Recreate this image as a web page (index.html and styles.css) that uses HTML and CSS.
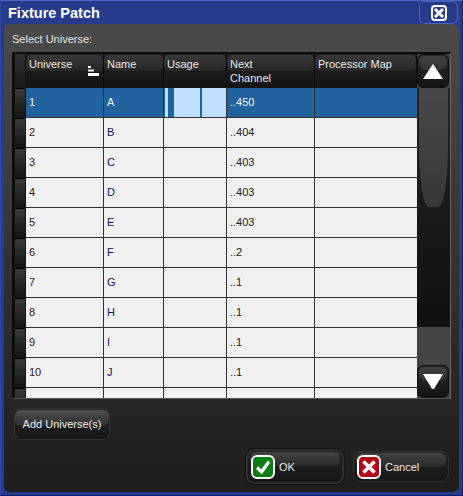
FILE: index.html
```html
<!DOCTYPE html>
<html lang="en">
<head>
    <meta charset="UTF-8">
    <title>Fixture Patch</title>
    <link rel="stylesheet" href="styles.css">
</head>
<body>
    <div class="window">
        <div class="titlebar">
            <span class="title">Fixture Patch</span>
            <div class="close-btn">
                <svg width="16" height="16" viewBox="0 0 16 16">
                    <rect x="1" y="1" width="14" height="14" rx="3" fill="none" stroke="#fff" stroke-width="2"/>
                    <path d="M4 4 L12 12 M12 4 L4 12" stroke="#fff" stroke-width="3"/>
                </svg>
            </div>
        </div>
        <div class="panel">
            <div class="select-label">Select Universe:</div>
            <div class="grid-box">
                <div class="selectors">
                    <div class="sel-head"></div>
                    <div class="sel"></div><div class="sel"></div><div class="sel"></div><div class="sel"></div><div class="sel"></div>
                    <div class="sel"></div><div class="sel"></div><div class="sel"></div><div class="sel"></div><div class="sel"></div>
                    <div class="sel"></div>
                </div>
                <div class="table">
                    <div class="row head">
                        <div class="hcell">Universe
                            <svg class="sort" width="11" height="10" viewBox="0 0 11 10">
                                <path d="M0 0h3v2H0zM0 3.500h6v2H0zM0 7h11v3H0z" fill="#fff"/>
                            </svg>
                        </div>
                        <div class="hcell">Name</div>
                        <div class="hcell">Usage</div>
                        <div class="hcell">Next<br>Channel</div>
                        <div class="hcell">Processor Map</div>
                    </div>
                    <div class="row active">
                        <div class="cell">1</div><div class="cell">A</div>
                        <div class="cell usage">
                            <span class="use" style="width:3px"></span>
                            <span class="use" style="width:26px;margin-left:6px"></span>
                            <span class="use" style="width:24px;margin-left:2px"></span>
                        </div>
                        <div class="cell">..450</div><div class="cell"></div>
                    </div>
                    <div class="row"><div class="cell num">2</div><div class="cell name">B</div><div class="cell"></div><div class="cell">..404</div><div class="cell"></div></div>
                    <div class="row"><div class="cell num">3</div><div class="cell name">C</div><div class="cell"></div><div class="cell">..403</div><div class="cell"></div></div>
                    <div class="row"><div class="cell num">4</div><div class="cell name">D</div><div class="cell"></div><div class="cell">..403</div><div class="cell"></div></div>
                    <div class="row"><div class="cell num">5</div><div class="cell name">E</div><div class="cell"></div><div class="cell">..403</div><div class="cell"></div></div>
                    <div class="row"><div class="cell num">6</div><div class="cell name">F</div><div class="cell"></div><div class="cell">..2</div><div class="cell"></div></div>
                    <div class="row"><div class="cell num">7</div><div class="cell name">G</div><div class="cell"></div><div class="cell">..1</div><div class="cell"></div></div>
                    <div class="row"><div class="cell num">8</div><div class="cell name">H</div><div class="cell"></div><div class="cell">..1</div><div class="cell"></div></div>
                    <div class="row"><div class="cell num">9</div><div class="cell name">I</div><div class="cell"></div><div class="cell">..1</div><div class="cell"></div></div>
                    <div class="row"><div class="cell num">10</div><div class="cell name">J</div><div class="cell"></div><div class="cell">..1</div><div class="cell"></div></div>
                    <div class="row"><div class="cell"></div><div class="cell"></div><div class="cell"></div><div class="cell"></div><div class="cell"></div></div>
                </div>
                <div class="scrollbar">
                    <div class="arrow-btn up"><svg width="20" height="15" viewBox="0 0 20 15"><path d="M10 0 L20 15 H0 Z" fill="#fff"/></svg></div>
                    <div class="thumb"></div>
                    <div class="track"></div>
                    <div class="arrow-btn down"><svg width="20" height="15" viewBox="0 0 20 15"><path d="M0 0 H20 L11 15 H9 Z" fill="#fff"/></svg></div>
                </div>
            </div>
            <div class="add-row">
                <div class="btn add-btn">Add Universe(s)</div>
            </div>
            <div class="actions">
                <div class="btn action ok">
                    <svg width="24" height="24" viewBox="0 0 24 24">
                        <rect x="1" y="1" width="22" height="22" rx="5" fill="#0a7d12" stroke="#fff" stroke-width="2"/>
                        <path d="M6 12.500 L10.500 17 L18 6.500" fill="none" stroke="#fff" stroke-width="3.400"/>
                    </svg>
                    <span>OK</span>
                </div>
                <div class="btn action cancel">
                    <svg width="24" height="24" viewBox="0 0 24 24">
                        <rect x="1" y="1" width="22" height="22" rx="5" fill="#b5070f" stroke="#fff" stroke-width="2"/>
                        <path d="M6.500 6.500 L17.500 17.500 M17.500 6.500 L6.500 17.500" stroke="#fff" stroke-width="3.600"/>
                    </svg>
                    <span>Cancel</span>
                </div>
            </div>
        </div>
    </div>
</body>
</html>
```

FILE: styles.css
```css
* {
    box-sizing: border-box;
}
body {
    margin: 0;
    font-family: "Liberation Sans", Arial, sans-serif;
    font-size: 11px;
    background: #263b8c;
}
.window {
    width: 463px;
    height: 496px;
    display: flex;
    flex-direction: column;
    padding: 0 3px 3px;
    background: #263b8c;
    border-top: 1px solid #4a62c0;
    border-left: 1px solid #3049a8;
    border-right: 1px solid #14246a;
    border-bottom: 1px solid #0a1a70;
}
.titlebar {
    height: 23px;
    flex: none;
    display: flex;
    justify-content: space-between;
    align-items: center;
}
.title {
    color: #fff;
    font-size: 14.5px;
    font-weight: bold;
    margin-left: 4px;
}
.close-btn {
    width: 39px;
    height: 23px;
    margin-right: 1px;
    border: 1px solid #4a62c0;
    border-radius: 6px;
    display: flex;
    justify-content: center;
    align-items: center;
}
.panel {
    flex: 1;
    border-radius: 6px;
    background: linear-gradient(#4b4b4b 0, #444 60px, #282828 350px, #1e1e1e 100%);
    padding: 0 8px;
    display: flex;
    flex-direction: column;
}
.select-label {
    color: #e4e4e4;
    height: 28px;
    line-height: 30px;
}
.grid-box {
    height: 347px;
    display: flex;
    background: #111;
    border-top: 2px solid #0c0c0c;
    border-left: 2px solid #0c0c0c;
    border-right: 1px solid #666;
    border-bottom: 1px solid #555;
}
.selectors {
    width: 12px;
    flex: none;
    padding: 0 1px;
    overflow: hidden;
}
.sel-head {
    height: 34px;
    background: linear-gradient(#303030, #1a1a1a);
}
.sel {
    height: 30px;
    border-top: 1px solid #000;
    background: linear-gradient(#3a3a3a, #141414);
}
.table {
    width: 391px;
    flex: none;
    overflow: hidden;
}
.row {
    display: grid;
    grid-template-columns: 78px 60px 63px 88px 102px;
    height: 30px;
    background: #f0f0f0;
    border-bottom: 1px solid #333;
}
.row.head {
    height: 34px;
    background: #0c0c0c;
    border-bottom: 0;
}
.hcell {
    position: relative;
    color: #e8e8e8;
    padding: 3px 3px 0;
    line-height: 14px;
    height: 34px;
    margin: 0 1px 0 0;
    background: linear-gradient(#222, #141414);
}
.hcell::before {
    content: "";
    position: absolute;
    left: 0;
    right: 0;
    top: 1px;
    height: 16px;
    border-radius: 5px;
    background: linear-gradient(rgba(255, 255, 255, 0.1), rgba(255, 255, 255, 0.05));
}
.sort {
    position: absolute;
    right: 4px;
    top: 12px;
}
.cell {
    border-right: 1px solid #333;
    padding: 0 3px;
    line-height: 29px;
    color: #222;
}
.cell.num {
    color: #3a1010;
}
.cell.name {
    color: #10106a;
}
.cell:last-child {
    border-right: 0;
}
.row.active {
    background: #20639f;
}
.row.active .cell {
    color: #f4f4f4;
}
.usage {
    display: flex;
    padding: 0 0 0 1px;
}
.use {
    height: 29px;
    background: #bfdfff;
}
.scrollbar {
    width: 33px;
    flex: none;
    display: flex;
    flex-direction: column;
    background: #444;
}
.arrow-btn {
    position: relative;
    height: 34px;
    flex: none;
    width: 32px;
    display: flex;
    justify-content: center;
    align-items: center;
    border-radius: 6px;
    background: linear-gradient(#2a2a2a 0, #141414 100%);
    border: 1px solid #111;
}
.arrow-btn::before {
    content: "";
    position: absolute;
    left: 1px;
    right: 1px;
    top: 1px;
    height: 14px;
    border-radius: 5px 5px 8px 8px;
    background: rgba(255, 255, 255, 0.1);
}
.arrow-btn svg {
    position: relative;
}
.arrow-btn.down {
    height: 33px;
}
.thumb {
    position: relative;
    height: 239px;
    flex: none;
    background: linear-gradient(#242424, #101010);
}
.thumb::before {
    content: "";
    position: absolute;
    left: 2px;
    right: 2px;
    top: 0;
    height: 119px;
    border-radius: 0 0 10px 10px / 0 0 60px 60px;
    background: linear-gradient(#484848, #383838);
}
.track {
    flex: 1;
}
.add-row {
    padding: 9px 0 0 2px;
    height: 50px;
}
.btn {
    position: relative;
    color: #e8e8e8;
    border-radius: 8px;
    background: linear-gradient(#242424, #161616);
    border: 1px solid #333;
}
.btn::before {
    content: "";
    position: absolute;
    left: 2px;
    right: 2px;
    top: 1px;
    height: 14px;
    border-radius: 6px;
    background: linear-gradient(rgba(255, 255, 255, 0.14), rgba(255, 255, 255, 0.06));
}
.add-btn {
    width: 96px;
    height: 32px;
    line-height: 30px;
    text-align: center;
}
.add-btn::before {
    left: 0;
    right: 0;
    height: 16px;
    background: linear-gradient(rgba(255, 255, 255, 0.2), rgba(255, 255, 255, 0.08));
}
.actions {
    display: flex;
    justify-content: flex-end;
    align-items: center;
    gap: 9px;
    padding-right: 2px;
}
.action {
    display: flex;
    align-items: center;
    gap: 4px;
    padding-left: 3px;
    height: 31px;
    width: 96px;
}
.action svg {
    position: relative;
}
.action.ok {
    width: 98px;
    height: 35px;
    border: 2px solid #2f2f2f;
    outline: 1px solid #141414;
}
```
